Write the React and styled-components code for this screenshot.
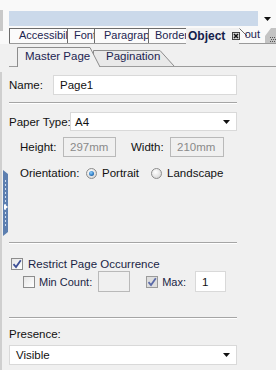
import React from "react";
import styled, { createGlobalStyle } from "styled-components";

const Global = createGlobalStyle`
  html, body { margin: 0; padding: 0; background: #f0f0f0; }
  * { box-sizing: border-box; }
`;

const Page = styled.div`
  width: 276px;
  height: 370px;
  overflow: hidden;
  background: #f0f0f0;
  display: flex;
  flex-direction: column;
  font-family: "Liberation Sans", Arial, sans-serif;
  font-size: 11px;
  color: #111;
`;

const Header = styled.div`
  display: flex;
  height: 44px;
  background: #f9f9f9;
`;

const LeftStub = styled.div`
  width: 3px;
  margin-top: 10px;
  height: 21px;
  background: #c9c9c9;
`;

const HeaderMain = styled.div`
  flex: 1;
  margin-left: 6px;
  display: flex;
  flex-direction: column;
`;

const ComboRow = styled.div`
  display: flex;
  height: 15px;
  margin-top: 11px;
`;

const BlueBar = styled.div`
  flex: 1;
  background: #cbd9ea;
`;

const ComboArrow = styled.div`
  width: 18px;
  display: flex;
  align-items: center;
  justify-content: center;
`;

const TabStrip = styled.div`
  display: flex;
  align-items: flex-end;
  height: 18px;
  border-bottom: 1px solid #9a9a9a;
`;

const Tab = styled.div`
  width: ${(p) => p.w}px;
  height: 15px;
  margin-right: -1px;
  border: 1px solid #6c6c6c;
  border-bottom: none;
  background: #fbfbfb;
  padding-left: ${(p) => p.pl}px;
  white-space: nowrap;
  overflow: hidden;
  line-height: 13px;
  color: #1c2450;
  flex-shrink: 0;
`;

const ActiveTab = styled.div`
  width: ${(p) => p.w}px;
  height: 16px;
  margin-bottom: -1px;
  background: #f0f0f0;
  display: flex;
  align-items: center;
  padding-left: 2px;
  gap: 7px;
  font-weight: bold;
  font-size: 12px;
  color: #15204a;
  flex-shrink: 0;
`;

const CloseBox = styled.span`
  width: 8px;
  height: 8px;
  border: 1px solid #444;
  background: #d8d8d8;
  display: flex;
  align-items: center;
  justify-content: center;
`;

const OutTab = styled.div`
  position: relative;
  width: 26px;
  height: 15px;
  flex-shrink: 0;
  padding-left: 6px;
  line-height: 13px;
  color: #1c2450;
`;

const TextClip = styled.div`
  position: relative;
  z-index: 1;
  overflow: hidden;
  white-space: nowrap;
`;

const TabShape = styled.svg`
  position: absolute;
  left: 0;
  top: 0;
  z-index: 0;
`;

const TabText = styled.span`
  position: relative;
  z-index: 1;
  display: inline-block;
  margin-left: ${(p) => p.ml || 0}px;
`;

const Grip = styled.div`
  flex: 1;
  height: 15px;
  position: relative;
`;

const Body = styled.div`
  flex: 1;
  display: flex;
`;

const Gutter = styled.div`
  width: 9px;
  position: relative;
  display: flex;
  flex-direction: column;
`;

const GutterLine = styled.div`
  width: 2px;
  margin-top: 28px;
  height: 300px;
  background: #cfcfcf;
`;

const Handle = styled.svg`
  position: absolute;
  left: 3px;
  top: 126px;
`;

const Main = styled.div`
  flex: 1;
  display: flex;
  flex-direction: column;
`;

const SubTabs = styled.div`
  display: flex;
  align-items: flex-end;
  height: 23px;
  padding-left: 8px;
  border-bottom: 1px solid #9c9c9c;
`;

const SlantTab = styled.div`
  position: relative;
  width: ${(p) => p.w}px;
  height: ${(p) => p.h}px;
  margin-left: ${(p) => p.ml || 0}px;
  margin-bottom: ${(p) => (p.active ? -1 : 0)}px;
  padding-left: ${(p) => p.pl}px;
  padding-top: ${(p) => p.pt}px;
  z-index: ${(p) => (p.active ? 2 : 1)};
  color: #1c2450;
  font-size: 11.5px;
  white-space: nowrap;
  flex-shrink: 0;
`;

const Form = styled.div`
  width: 228px;
  display: flex;
  flex-direction: column;
`;

const Row = styled.div`
  display: flex;
  align-items: center;
  height: ${(p) => p.h || 20}px;
  margin-top: ${(p) => p.mt || 0}px;
  padding-left: ${(p) => p.pl || 0}px;
  white-space: nowrap;
`;

const Label = styled.span`
  width: ${(p) => p.w}px;
  margin-left: ${(p) => p.ml || 0}px;
  flex-shrink: 0;
  color: #111;
  white-space: nowrap;
  font-size: 11.5px;
`;

const TextBox = styled.div`
  width: ${(p) => (p.w ? `${p.w}px` : "auto")};
  flex: ${(p) => (p.w ? "none" : 1)};
  height: ${(p) => p.h || 20}px;
  margin-left: ${(p) => p.ml || 0}px;
  background: ${(p) => (p.disabled ? "#f0f0f0" : "#ffffff")};
  border: 1px solid ${(p) => (p.disabled ? "#b9b9b9" : "#d9d9d9")};
  color: ${(p) => (p.disabled ? "#8a8a8a" : "#111")};
  padding-left: ${(p) => p.pad || 6}px;
  display: flex;
  align-items: center;
  font-size: 11.5px;
`;

const Select = styled(TextBox)`
  justify-content: space-between;
  padding-right: 6px;
`;

const Separator = styled.div`
  height: 2px;
  margin-top: ${(p) => p.mt}px;
  border-top: 1px solid #a5a5a5;
  border-bottom: 1px solid #ffffff;
`;

const Option = styled.label`
  display: flex;
  align-items: center;
  gap: ${(p) => p.gap || 5}px;
  margin-left: ${(p) => p.ml || 0}px;
  margin-right: ${(p) => p.mr || 0}px;
  color: ${(p) => p.color || "#111"};
  font-size: ${(p) => p.fs || 11.5}px;
  white-space: nowrap;
  flex-shrink: 0;
`;

const Radio = styled.span`
  width: 11px;
  height: 11px;
  border-radius: 50%;
  border: 1px solid #8c8c8c;
  background: radial-gradient(circle at 40% 35%, #ffffff 0%, #e2e2e2 60%, #c8c8c8 100%);
  display: flex;
  align-items: center;
  justify-content: center;
  &::after {
    content: "";
    display: ${(p) => (p.checked ? "block" : "none")};
    width: 5px;
    height: 5px;
    border-radius: 50%;
    background: radial-gradient(circle at 40% 35%, #8fd0ff 0%, #2a78c0 60%, #17457a 100%);
  }
`;

const Check = styled.span`
  width: 12px;
  height: 12px;
  border: 1px solid ${(p) => (p.dim ? "#9a9a9a" : "#8c8c8c")};
  background: ${(p) => (p.dim ? "#dedede" : "linear-gradient(135deg, #e6e6e6, #ffffff)")};
  display: flex;
  align-items: center;
  justify-content: center;
  flex-shrink: 0;
`;

const Arrow = () => (
  <svg width="7" height="4" viewBox="0 0 7 4">
    <path d="M0 0H7L3.5 4Z" fill="#111" />
  </svg>
);

const Tick = ({ color }) => (
  <svg width="10" height="10" viewBox="0 0 10 10">
    <path d="M1.5 5.2 L4 8 L8.8 1.2" stroke={color} strokeWidth="1.8" fill="none" />
  </svg>
);

export default function App() {
  return (
    <>
      <Global />
      <Page>
        <Header>
          <LeftStub />
          <HeaderMain>
            <ComboRow>
              <BlueBar />
              <ComboArrow>
                <Arrow />
              </ComboArrow>
            </ComboRow>
            <TabStrip>
              <Tab w={59} pl={9}>Accessibility</Tab>
              <Tab w={28} pl={6}>Font</Tab>
              <Tab w={55} pl={9}>Paragraph</Tab>
              <Tab w={39} pl={6}>Border</Tab>
              <ActiveTab w={53}>
                Object
                <CloseBox>
                  <svg width="6" height="6" viewBox="0 0 6 6">
                    <path d="M1 1L5 5M5 1L1 5" stroke="#111" strokeWidth="1.5" />
                  </svg>
                </CloseBox>
              </ActiveTab>
              <OutTab>
                <TabShape width="26" height="15">
                  <path d="M0.5 0.5 L8 8" fill="none" stroke="#6c6c6c" />
                </TabShape>
                <TextClip>
                  <TabText ml={-18}>Layout</TabText>
                </TextClip>
              </OutTab>
              <Grip>
                <svg width="11" height="15" viewBox="0 0 11 15" style={{ position: "absolute", left: 0, top: 0 }}>
                  <path d="M0 15 L0 8 L6 0 L11 0 L11 15Z" fill="#c4c4c4" />
                  <g fill="#555">
                    <rect x="5" y="9" width="1" height="1" />
                    <rect x="7" y="9" width="1" height="1" />
                    <rect x="9" y="9" width="1" height="1" />
                    <rect x="6" y="11" width="1" height="1" />
                    <rect x="8" y="11" width="1" height="1" />
                    <rect x="10" y="11" width="1" height="1" />
                    <rect x="5" y="13" width="1" height="1" />
                    <rect x="7" y="13" width="1" height="1" />
                    <rect x="9" y="13" width="1" height="1" />
                  </g>
                </svg>
              </Grip>
            </TabStrip>
          </HeaderMain>
        </Header>
        <Body>
          <Gutter>
            <GutterLine />
            <Handle width="6" height="66" viewBox="0 0 6 66">
              <path d="M0 0 L5 4 L5 62 L0 66Z" fill="#5d7fb0" />
              <g fill="#cfdcf0">
                {Array.from({ length: 12 }).map((_, i) => (
                  <rect key={i} x="2" y={10 + i * 4} width="1" height="2" />
                ))}
              </g>
              <path d="M1 34 L5 37 L1 40Z" fill="#ffffff" />
            </Handle>
          </Gutter>
          <Main>
            <SubTabs>
              <SlantTab w={84} h={20} pl={8} pt={3} active>
                <TabShape width="84" height="20">
                  <path d="M0.5 20 V0.5 H73 L83 20" fill="#f0f0f0" stroke="#8c8c8c" />
                </TabShape>
                <TabText>Master Page</TabText>
              </SlantTab>
              <SlantTab w={82} h={16} ml={-8} pl={13} pt={0}>
                <TabShape width="82" height="16">
                  <path d="M0.5 16 V0.5 H67 L81 16" fill="#e9e9e9" stroke="#8c8c8c" />
                </TabShape>
                <TabText>Pagination</TabText>
              </SlantTab>
            </SubTabs>
            <Form>
              <Row mt={8}>
                <Label w={44}>Name:</Label>
                <TextBox>Page1</TextBox>
              </Row>
              <Separator mt={7} />
              <Row mt={8} h={19}>
                <Label w={61}>Paper Type:</Label>
                <Select h={19} pad={4}>
                  A4
                  <Arrow />
                </Select>
              </Row>
              <Row mt={6} pl={11}>
                <Label w={43}>Height:</Label>
                <TextBox w={53} disabled>297mm</TextBox>
                <Label w={39} ml={15}>Width:</Label>
                <TextBox w={54} disabled>210mm</TextBox>
              </Row>
              <Row mt={7} pl={11} h={18}>
                <Label w={66}>Orientation:</Label>
                <Option mr={12}>
                  <Radio checked />
                  Portrait
                </Option>
                <Option>
                  <Radio />
                  Landscape
                </Option>
              </Row>
              <Separator mt={60} />
              <Row mt={13} pl={2} h={14}>
                <Option color="#1a1f45">
                  <Check>
                    <Tick color="#3d4f96" />
                  </Check>
                  Restrict Page Occurrence
                </Option>
              </Row>
              <Row mt={0} pl={14} h={21}>
                <Option color="#1a1f45" fs={11} gap={4}>
                  <Check />
                  Min Count:
                </Option>
                <TextBox w={32} h={21} ml={6} disabled />
                <Option color="#1a1f45" ml={16} gap={4} fs={11}>
                  <Check dim>
                    <Tick color="#5a6aa8" />
                  </Check>
                  Max:
                </Option>
                <TextBox w={31} h={21} ml={9}>1</TextBox>
              </Row>
              <Separator mt={25} />
              <Row mt={6} h={18}>
                <Label w={80}>Presence:</Label>
              </Row>
              <Row mt={2} h={20}>
                <Select h={20}>
                  Visible
                  <Arrow />
                </Select>
              </Row>
            </Form>
          </Main>
        </Body>
      </Page>
    </>
  );
}
